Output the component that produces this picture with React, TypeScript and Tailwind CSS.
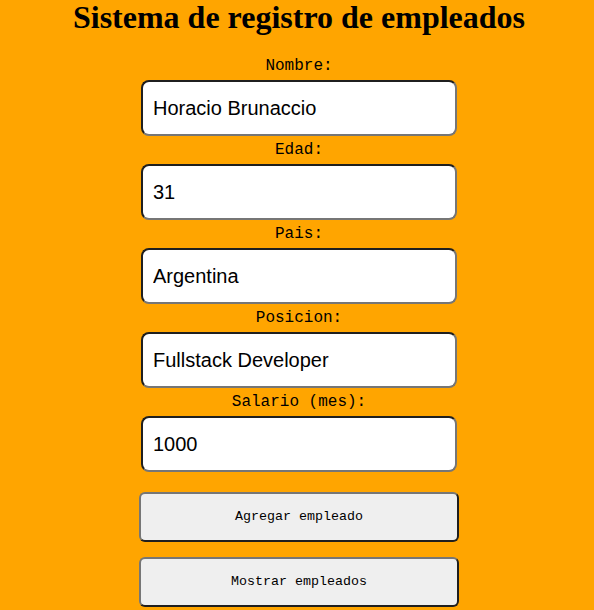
export default function App() {
  const fields = [
    { label: "Nombre:", value: "Horacio Brunaccio" },
    { label: "Edad:", value: "31" },
    { label: "Pais:", value: "Argentina" },
    { label: "Posicion:", value: "Fullstack Developer" },
    { label: "Salario (mes):", value: "1000" },
  ];
  return (
    <div className="w-[594px] h-[610px] bg-[#ffa500] overflow-hidden flex flex-col items-center pl-[4px]">
      <h1 className="text-[32px] font-bold leading-[37px] text-black mt-[-1px] h-[52px] font-['Liberation_Serif',serif]">
        Sistema de registro de empleados
      </h1>
      {fields.map((f, i) => (
        <div key={f.label} className={i === 0 ? "flex flex-col items-center mt-[1px]" : "flex flex-col items-center"}>
          <label className="text-[16px] leading-[28px] h-[28px] text-black font-['Liberation_Mono',monospace]">
            {f.label}
          </label>
          <input
            readOnly
            value={f.value}
            className="w-[316px] h-[56px] bg-white rounded-[8px] border-2 border-t-[#1f1f1f] border-l-[#1f1f1f] border-b-[#767676] border-r-[#767676] px-[10px] text-[20px] text-black outline-none font-['Liberation_Sans',Arial,sans-serif]"
          />
        </div>
      ))}
      <button className="mt-[20px] w-[320px] h-[50px] bg-[#efefef] rounded-[6px] border-2 border-t-[#767676] border-l-[#767676] border-b-[#1f1f1f] border-r-[#1f1f1f] text-[13.33px] text-black font-['Liberation_Mono',monospace]">
        Agregar empleado
      </button>
      <button className="mt-[15px] w-[320px] h-[50px] bg-[#efefef] rounded-[6px] border-2 border-t-[#767676] border-l-[#767676] border-b-[#1f1f1f] border-r-[#1f1f1f] text-[13.33px] text-black font-['Liberation_Mono',monospace]">
        Mostrar empleados
      </button>
    </div>
  );
}
